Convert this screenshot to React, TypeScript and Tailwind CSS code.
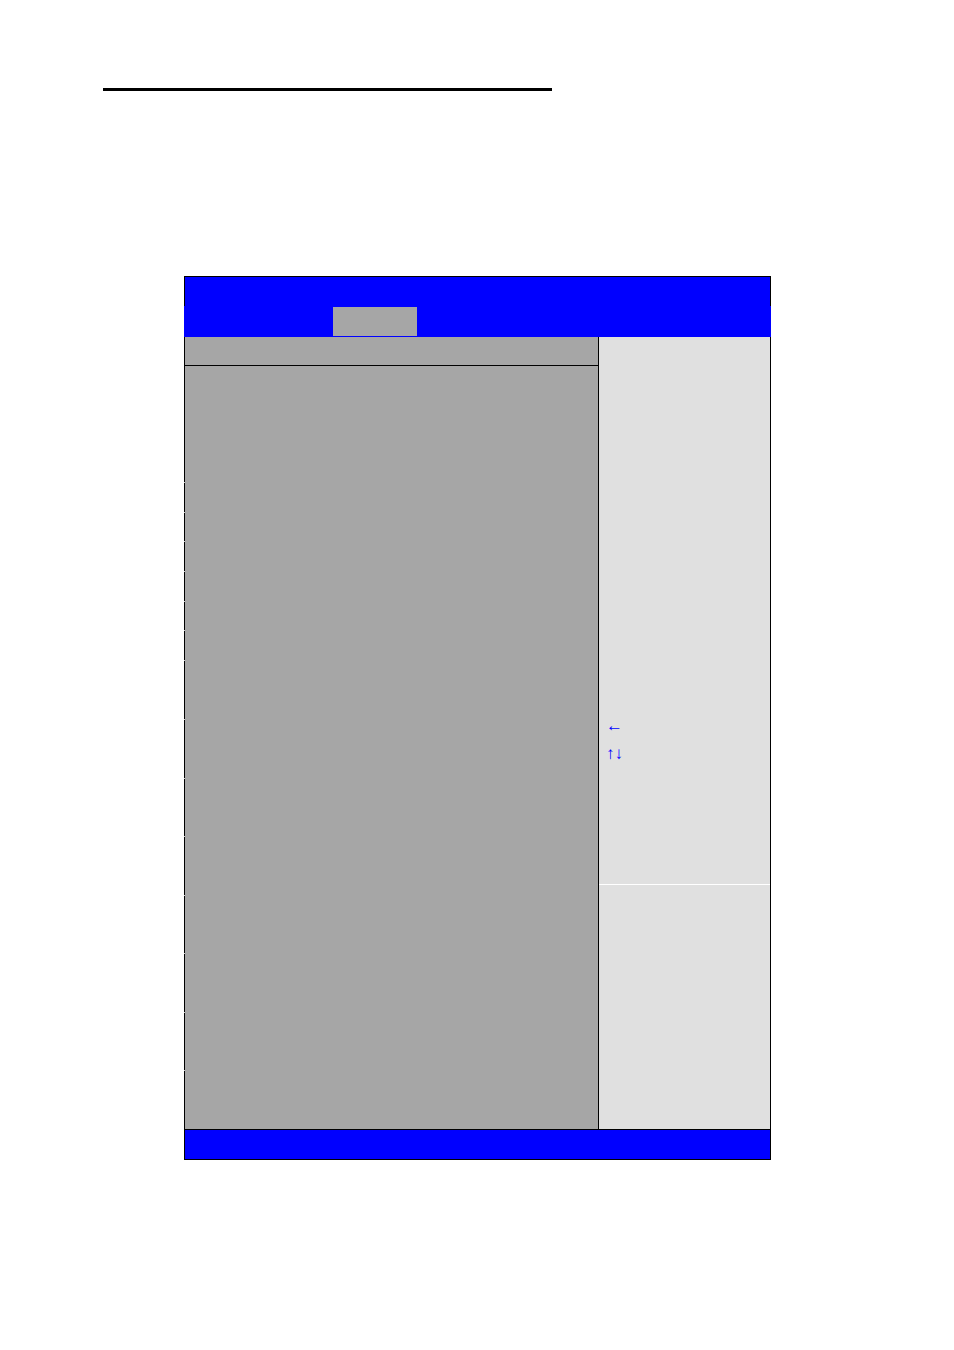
// Each entry is one group of setup rows, closed by a light notch in the left rule
const ROWS = [
  'h-[116px]',
  'h-[29px]',
  'h-[28px]',
  'h-[29px]',
  'h-[29px]',
  'h-[28px]',
  'h-[29px]',
  'h-[58px]',
  'h-[58px]',
  'h-[57px]',
  'h-[58px]',
  'h-[57px]',
  'h-[58px]',
  'h-[57px]',
];

function SetupRows() {
  return (
    <div className="flex flex-1 flex-col">
      {ROWS.map((height, i) => (
        <div key={i}>
          <div className={`border-l border-black ${height}`} />
          <div className="h-px border-l border-[#c8c8c8]" />
        </div>
      ))}
      <div className="h-[58px] border-l border-black" />
    </div>
  );
}

function HelpPanel() {
  return (
    <aside className="flex w-[173px] shrink-0 flex-col border-x border-black bg-[#e0e0e0]">
      <div className="flex h-[547px] flex-col justify-end pb-[116px] pl-[7px] font-['Liberation_Serif',serif] text-[17px] leading-7 text-[#0000ff]">
        <div>←</div>
        <div>↑↓</div>
      </div>
      <div className="flex-1 border-t border-white" />
    </aside>
  );
}

export default function App() {
  return (
    <div className="min-h-screen bg-white pt-[88px] pb-[190px]">
      <div className="ml-[103px] w-[449px] max-w-full border-t-3 border-black" />

      <main className="mt-[185px] mr-[183px] ml-[184px]">
        <header className="h-[30px] border-x border-t border-black bg-[#0000ff]" />

        <nav className="flex h-[31px] bg-[#0000ff] pt-px pb-px pl-[149px]">
          <div className="w-[84px] bg-[#a6a6a6]" />
        </nav>

        <div className="flex">
          <section className="flex flex-1 flex-col bg-[#a6a6a6]">
            <div className="h-[29px] border-b border-l border-black" />
            <SetupRows />
          </section>
          <HelpPanel />
        </div>

        <footer className="h-[31px] border border-black bg-[#0000ff]" />
      </main>
    </div>
  );
}
